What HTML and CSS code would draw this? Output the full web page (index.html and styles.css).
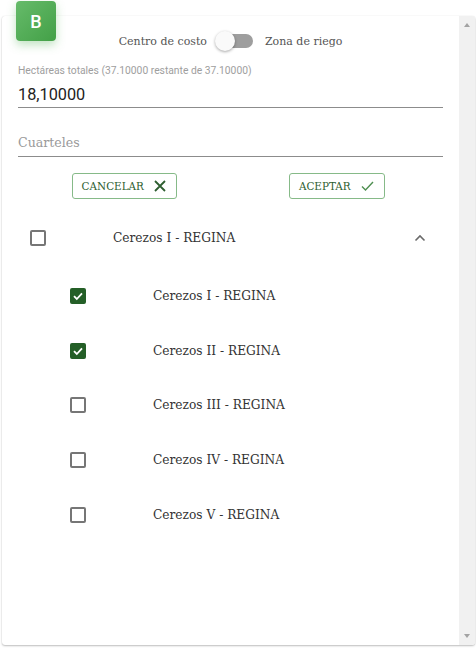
FILE: index.html
```html
<!DOCTYPE html>
<html lang="es">
<head>
<meta charset="utf-8">
<title>Cuarteles</title>
<link rel="stylesheet" href="styles.css">
</head>
<body>
<div class="page">
  <div class="badge">B</div>
  <div class="card">
    <div class="content">
      <div class="toggle-row">
        <span class="toggle-label">Centro de costo</span>
        <span class="switch"><span class="track"></span><span class="thumb"></span></span>
        <span class="toggle-label">Zona de riego</span>
      </div>
      <div class="hint">Hectáreas totales (37.10000 restante de 37.10000)</div>
      <div class="input">18,10000</div>
      <div class="select">Cuarteles</div>
      <div class="actions">
        <button class="btn">CANCELAR
          <svg class="ico" width="12" height="12" viewBox="0 0 12 12"><path d="M1 1L11 11M11 1L1 11" stroke="#2e5e30" stroke-width="1.8" fill="none"/></svg>
        </button>
        <button class="btn">ACEPTAR
          <svg class="ico" width="13" height="12" viewBox="0 0 13 12"><path d="M1 6.5L4.5 10L12 2" stroke="#4e8f50" stroke-width="1.4" fill="none"/></svg>
        </button>
      </div>
      <div class="parent">
        <span class="cb"></span>
        <span class="label parent-label">Cerezos I - REGINA</span>
        <svg class="chev" width="12" height="8" viewBox="0 0 12 8"><path d="M1.5 6.5L6 2L10.5 6.5" stroke="#6a6a6a" stroke-width="1.6" fill="none"/></svg>
      </div>
      <div class="children">
        <div class="child"><span class="cb on"><svg width="12" height="12" viewBox="0 0 12 12"><path d="M2 6.2L4.8 9L10 3.4" stroke="#fff" stroke-width="1.8" fill="none"/></svg></span><span class="label">Cerezos I - REGINA</span></div>
        <div class="child"><span class="cb on"><svg width="12" height="12" viewBox="0 0 12 12"><path d="M2 6.2L4.8 9L10 3.4" stroke="#fff" stroke-width="1.8" fill="none"/></svg></span><span class="label">Cerezos II - REGINA</span></div>
        <div class="child"><span class="cb"></span><span class="label">Cerezos III - REGINA</span></div>
        <div class="child"><span class="cb"></span><span class="label">Cerezos IV - REGINA</span></div>
        <div class="child"><span class="cb"></span><span class="label">Cerezos V - REGINA</span></div>
      </div>
    </div>
    <div class="scrollbar">
      <span class="arrow up"></span>
      <span class="arrow down"></span>
    </div>
  </div>
</div>
</body>
</html>
```
FILE: styles.css
```css
html, body {
  margin: 0;
  padding: 0;
  background: #fff;
}
body {
  width: 476px;
  height: 652px;
  overflow: hidden;
  font-family: "DejaVu Serif", serif;
}
.page {
  position: relative;
  padding: 16px 1px 0 2px;
}
.badge {
  position: absolute;
  left: 16px;
  top: 1px;
  width: 40px;
  height: 40px;
  border-radius: 4px;
  background: linear-gradient(135deg, #66bb6a, #43a047);
  box-shadow: 0 4px 10px rgba(76, 175, 80, 0.35);
  color: #fff;
  font-family: Roboto, "Liberation Sans", sans-serif;
  font-size: 18px;
  font-weight: 500;
  display: flex;
  align-items: center;
  justify-content: center;
  z-index: 2;
}
.card {
  height: 629px;
  display: flex;
  border-radius: 3px;
  background: #fff;
  box-shadow: 0 1px 2px rgba(0,0,0,0.25), 0 0 1px rgba(0,0,0,0.12);
  overflow: hidden;
}
.content {
  flex: 1;
  padding: 10px 16px 0 16px;
}
.scrollbar {
  width: 16px;
  background: #f1f1f1;
  display: flex;
  flex-direction: column;
  justify-content: space-between;
  align-items: center;
  padding: 7px 0 7px;
}
.arrow {
  width: 0;
  height: 0;
  border-left: 3.5px solid transparent;
  border-right: 3.5px solid transparent;
}
.arrow.up { border-bottom: 4px solid #a3a3a3; }
.arrow.down { border-top: 4px solid #a3a3a3; }

.toggle-row {
  height: 30px;
  display: flex;
  align-items: center;
  justify-content: center;
}
.toggle-label {
  font-size: 11px;
  color: #555;
}
.switch {
  position: relative;
  width: 38px;
  height: 20px;
  margin: 0 12px 0 8px;
}
.track {
  position: absolute;
  left: 4px;
  top: 3px;
  width: 34px;
  height: 14px;
  border-radius: 7px;
  background: #9e9e9e;
}
.thumb {
  position: absolute;
  left: 0;
  top: 0;
  width: 20px;
  height: 20px;
  border-radius: 50%;
  background: #fafafa;
  box-shadow: 0 1px 3px rgba(0,0,0,0.35);
}
.hint {
  margin-top: 8px;
  height: 14px;
  line-height: 14px;
  font-family: Roboto, "Liberation Sans", sans-serif;
  font-size: 10.3px;
  color: #9e9e9e;
}
.input {
  margin-top: 4px;
  height: 25px;
  line-height: 26px;
  border-bottom: 1px solid #8c8c8c;
  font-family: Roboto, "Liberation Sans", sans-serif;
  font-size: 16.3px;
  color: #222;
}
.select {
  margin-top: 21px;
  height: 27px;
  line-height: 27px;
  border-bottom: 1px solid #8c8c8c;
  font-size: 12.6px;
  color: #9a9a9a;
}
.actions {
  margin-top: 16px;
  display: grid;
  grid-template-columns: 1fr 1fr;
  justify-items: center;
}
.btn {
  height: 26px;
  box-sizing: border-box;
  padding: 0 10px 0 9px;
  border: 1px solid #86ba88;
  border-radius: 3px;
  background: #fff;
  color: #2e5e30;
  font-family: "DejaVu Serif", serif;
  font-size: 10.4px;
  display: flex;
  align-items: center;
  gap: 10px;
}
.parent {
  margin-top: 12px;
  height: 54px;
  display: flex;
  align-items: center;
  padding: 0 17px 0 12px;
}
.parent-label { flex: 1; }
.children { margin-top: 4px; }
.child {
  height: 54.6px;
  display: flex;
  align-items: center;
  padding-left: 52px;
}
.cb {
  width: 16px;
  height: 16px;
  box-sizing: border-box;
  border: 2px solid #767676;
  border-radius: 2px;
  flex: none;
  display: flex;
  align-items: center;
  justify-content: center;
}
.cb.on {
  background: #245f27;
  border-color: #245f27;
}
.label {
  margin-left: 67px;
  font-size: 12.2px;
  color: #333;
}
```
